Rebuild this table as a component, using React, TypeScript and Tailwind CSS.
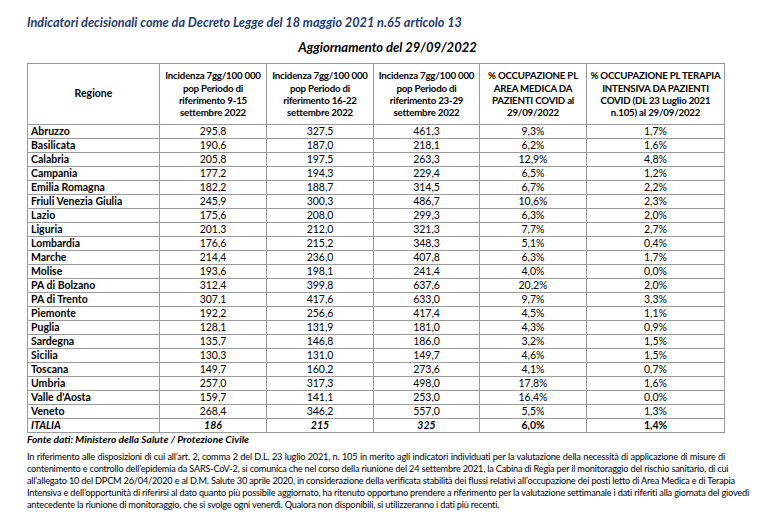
const rows: [string, string, string, string, string, string][] = [
  ["Abruzzo", "295,8", "327,5", "461,3", "9,3%", "1,7%"],
  ["Basilicata", "190,6", "187,0", "218,1", "6,2%", "1,6%"],
  ["Calabria", "205,8", "197,5", "263,3", "12,9%", "4,8%"],
  ["Campania", "177,2", "194,3", "229,4", "6,5%", "1,2%"],
  ["Emilia Romagna", "182,2", "188,7", "314,5", "6,7%", "2,2%"],
  ["Friuli Venezia Giulia", "245,9", "300,3", "486,7", "10,6%", "2,3%"],
  ["Lazio", "175,6", "208,0", "299,3", "6,3%", "2,0%"],
  ["Liguria", "201,3", "212,0", "321,3", "7,7%", "2,7%"],
  ["Lombardia", "176,6", "215,2", "348,3", "5,1%", "0,4%"],
  ["Marche", "214,4", "236,0", "407,8", "6,3%", "1,7%"],
  ["Molise", "193,6", "198,1", "241,4", "4,0%", "0,0%"],
  ["PA di Bolzano", "312,4", "399,8", "637,6", "20,2%", "2,0%"],
  ["PA di Trento", "307,1", "417,6", "633,0", "9,7%", "3,3%"],
  ["Piemonte", "192,2", "256,6", "417,4", "4,5%", "1,1%"],
  ["Puglia", "128,1", "131,9", "181,0", "4,3%", "0,9%"],
  ["Sardegna", "135,7", "146,8", "186,0", "3,2%", "1,5%"],
  ["Sicilia", "130,3", "131,0", "149,7", "4,6%", "1,5%"],
  ["Toscana", "149,7", "160,2", "273,6", "4,1%", "0,7%"],
  ["Umbria", "257,0", "317,3", "498,0", "17,8%", "1,6%"],
  ["Valle d'Aosta", "159,7", "141,1", "253,0", "16,4%", "0,0%"],
  ["Veneto", "268,4", "346,2", "557,0", "5,5%", "1,3%"],
];

const headers: string[][] = [
  ["Incidenza 7gg/100 000", "pop Periodo di", "riferimento 9-15", "settembre 2022"],
  ["Incidenza 7gg/100 000", "pop Periodo di", "riferimento 16-22", "settembre 2022"],
  ["Incidenza 7gg/100 000", "pop Periodo di", "riferimento 23-29", "settembre 2022"],
  ["% OCCUPAZIONE PL", "AREA MEDICA DA", "PAZIENTI COVID al", "29/09/2022"],
  ["% OCCUPAZIONE PL TERAPIA", "INTENSIVA DA PAZIENTI", "COVID (DL 23 Luglio 2021", "n.105) al 29/09/2022"],
];

const note = [
  "In riferimento alle disposizioni di cui all’art. 2, comma 2 del D.L. 23 luglio 2021, n. 105 in merito agli indicatori individuati per la valutazione della necessità di applicazione di misure di",
  "contenimento e controllo dell’epidemia da SARS-CoV-2, si comunica che nel corso della riunione del 24 settembre 2021, la Cabina di Regia per il monitoraggio del rischio sanitario, di cui",
  "all’allegato 10 del DPCM 26/04/2020 e al D.M. Salute 30 aprile 2020, in considerazione della verificata stabilità dei flussi relativi all’occupazione dei posti letto di Area Medica e di Terapia",
  "Intensiva e dell’opportunità di riferirsi al dato quanto più possibile aggiornato, ha ritenuto opportuno prendere a riferimento per la valutazione settimanale i dati riferiti alla giornata del giovedì",
];

const cell = "border border-[#9a9a9a] h-[14px] p-0 leading-[13px]";

export default function App() {
  return (
    <div className="w-[767px] h-[512px] bg-white text-black font-['Lato',sans-serif] px-[27px] pt-[14px] overflow-hidden">
      <p className="text-[12.7px] leading-[16px] font-bold italic text-[#1f3a6e]">
        Indicatori decisionali come da Decreto Legge del 18 maggio 2021 n.65 articolo 13
      </p>
      <p className="mt-[9px] pl-[8px] text-center text-[13px] leading-[16px] font-bold italic">
        Aggiornamento del 29/09/2022
      </p>

      {/* tabella indicatori */}
      <table className="mt-[8px] w-[697px] table-fixed border-collapse text-[10.5px]">
        <colgroup>
          <col className="w-[132px]" />
          <col className="w-[107px]" />
          <col className="w-[107px]" />
          <col className="w-[106px]" />
          <col className="w-[107px]" />
          <col className="w-[138px]" />
        </colgroup>
        <thead>
          <tr className="h-[61px]">
            <th className="border border-[#9a9a9a] font-bold text-center">Regione</th>
            {headers.map((h, i) => (
              <th
                key={i}
                className="border border-[#9a9a9a] font-bold text-center text-[9.7px] tracking-[-0.2px] leading-[12.3px] whitespace-nowrap"
              >
                {h.map((line, j) => (
                  <div key={j}>{line}</div>
                ))}
              </th>
            ))}
          </tr>
        </thead>
        <tbody>
          {rows.map((r) => (
            <tr key={r[0]}>
              <td className={`${cell} pl-[3px] font-bold text-left whitespace-nowrap`}>{r[0]}</td>
              {r.slice(1).map((v, i) => (
                <td key={i} className={`${cell} text-center`}>{v}</td>
              ))}
            </tr>
          ))}
          <tr>
            <td className={`${cell} pl-[3px] font-bold italic`}>ITALIA</td>
            <td className={`${cell} text-center font-bold italic`}>186</td>
            <td className={`${cell} text-center font-bold italic`}>215</td>
            <td className={`${cell} text-center font-bold italic`}>325</td>
            <td className={`${cell} text-center font-bold`}>6,0%</td>
            <td className={`${cell} text-center font-bold`}>1,4%</td>
          </tr>
        </tbody>
      </table>

      <p className="text-[10.2px] leading-[12px] font-bold italic">
        Fonte dati: Ministero della Salute / Protezione Civile
      </p>

      <div className="mt-[6px] w-[698px] text-[9.2px] tracking-[-0.2px] leading-[12px]">
        {note.map((line, i) => (
          <div key={i} className="text-justify [text-align-last:justify] whitespace-nowrap">
            {line}
          </div>
        ))}
        <div>
          antecedente la riunione di monitoraggio, che si svolge ogni venerdì. Qualora non disponibili, si utilizzeranno i dati più recenti.
        </div>
      </div>
    </div>
  );
}
